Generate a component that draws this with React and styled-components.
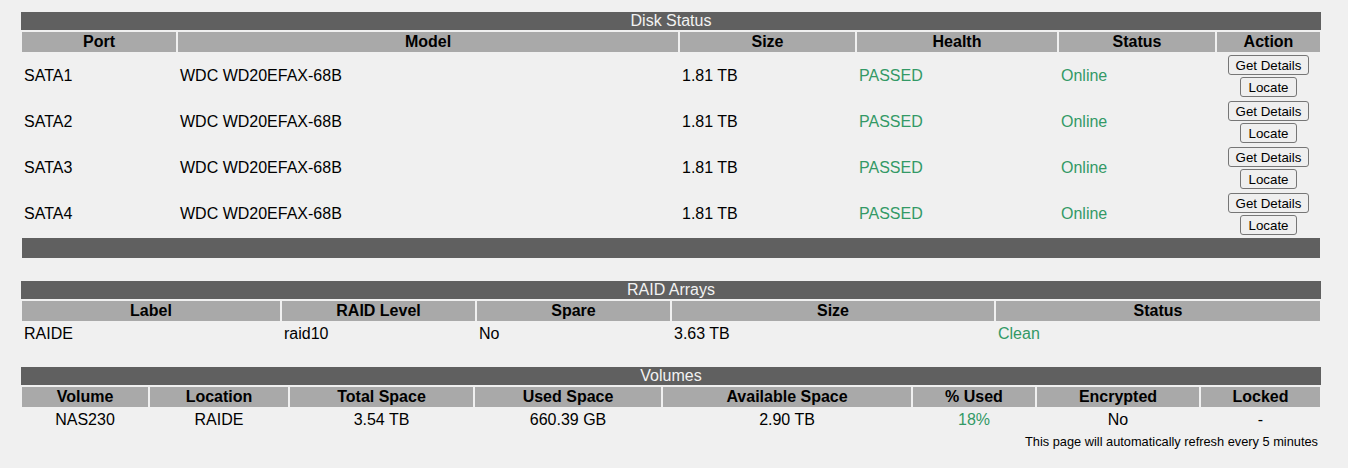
import React from "react";
import styled, { createGlobalStyle } from "styled-components";

const GlobalStyle = createGlobalStyle`
    body {
        margin: 0;
        background-color: #f0f0f0;
        font-family: "Liberation Sans", Arial, sans-serif;
        font-size: 16px;
        color: #000;
    }
`

const Page = styled.div`
    display: flex;
    flex-direction: column;
    width: 1298px;
    padding: 12px 0 0 22px;
`

const Table = styled.div`
    display: grid;
    grid-template-columns: ${(p) => p.cols};
    gap: 2px;
    margin-bottom: ${(p) => p.spaceAfter || 0}px;
`

const Title = styled.div`
    grid-column: 1 / -1;
    margin: 0 -1px;
    height: 18px;
    line-height: 18px;
    background-color: #606060;
    color: #f2f2f2;
    text-align: center;
`

const Head = styled.div`
    height: 20px;
    line-height: 20px;
    background-color: #a9a9a9;
    font-weight: bold;
    text-align: center;
`

const Cell = styled.div`
    display: flex;
    align-items: center;
    justify-content: ${(p) => (p.center ? "center" : "flex-start")};
    min-height: ${(p) => (p.tall ? 44 : 18)}px;
    line-height: 18px;
    padding: ${(p) => (p.tall ? "0 2px" : "2px 2px 0")};
    color: ${(p) => (p.ok ? "#339966" : "#000")};
`

const ActionCell = styled.div`
    display: flex;
    flex-direction: column;
    align-items: center;
    justify-content: center;
    gap: 2px;
    height: 44px;
`

const Button = styled.button`
    height: 20px;
    padding: 0 7px;
    font-family: "Liberation Sans", Arial, sans-serif;
    font-size: 13.33px;
    color: #000;
    background-color: #efefef;
    border: 1px solid #767676;
    border-radius: 3px;
`

const Footer = styled.div`
    grid-column: 1 / -1;
    height: 20px;
    background-color: #606060;
`

const Note = styled.div`
    margin-top: 5px;
    padding-right: 2px;
    text-align: right;
    font-size: 12.8px;
    line-height: 15px;
`

const disks = ["SATA1", "SATA2", "SATA3", "SATA4"]

const App = () => {
    return (
        <Page>
            <GlobalStyle />

            <Table cols="154px 500px 175px 200px 156px 103px" spaceAfter={23}>
                <Title>Disk Status</Title>
                <Head>Port</Head>
                <Head>Model</Head>
                <Head>Size</Head>
                <Head>Health</Head>
                <Head>Status</Head>
                <Head>Action</Head>
                {disks.map((port) => (
                    <React.Fragment key={port}>
                        <Cell tall>{port}</Cell>
                        <Cell tall>WDC WD20EFAX-68B</Cell>
                        <Cell tall>1.81 TB</Cell>
                        <Cell tall ok>PASSED</Cell>
                        <Cell tall ok>Online</Cell>
                        <ActionCell>
                            <Button>Get Details</Button>
                            <Button>Locate</Button>
                        </ActionCell>
                    </React.Fragment>
                ))}
                <Footer />
            </Table>

            <Table cols="258px 193px 193px 322px 324px" spaceAfter={24}>
                <Title>RAID Arrays</Title>
                <Head>Label</Head>
                <Head>RAID Level</Head>
                <Head>Spare</Head>
                <Head>Size</Head>
                <Head>Status</Head>
                <Cell>RAIDE</Cell>
                <Cell>raid10</Cell>
                <Cell>No</Cell>
                <Cell>3.63 TB</Cell>
                <Cell ok>Clean</Cell>
            </Table>

            <Table cols="126px 138px 183px 186px 248px 122px 162px 119px">
                <Title>Volumes</Title>
                <Head>Volume</Head>
                <Head>Location</Head>
                <Head>Total Space</Head>
                <Head>Used Space</Head>
                <Head>Available Space</Head>
                <Head>% Used</Head>
                <Head>Encrypted</Head>
                <Head>Locked</Head>
                <Cell center>NAS230</Cell>
                <Cell center>RAIDE</Cell>
                <Cell center>3.54 TB</Cell>
                <Cell center>660.39 GB</Cell>
                <Cell center>2.90 TB</Cell>
                <Cell center ok>18%</Cell>
                <Cell center>No</Cell>
                <Cell center>-</Cell>
            </Table>

            <Note>This page will automatically refresh every 5 minutes</Note>
        </Page>
    )
}

export default App;
